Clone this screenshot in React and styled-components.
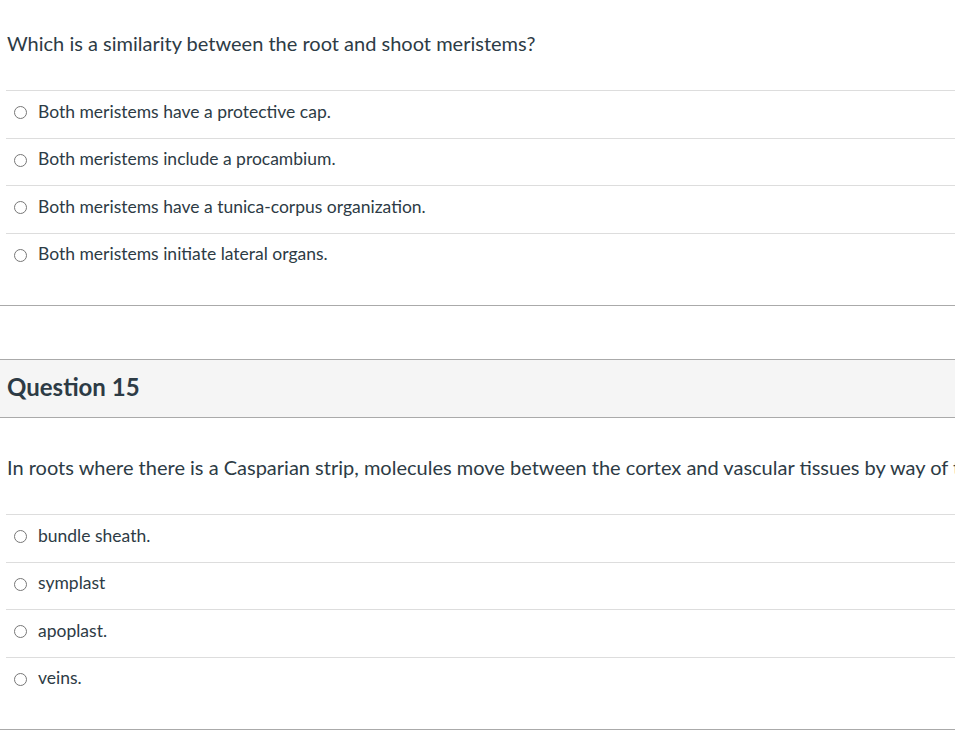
import React from "react";
import styled, { createGlobalStyle } from "styled-components";

const Global = createGlobalStyle`
  html, body { margin: 0; padding: 0; background: #fff; overflow: hidden; }
  body { font-family: Lato, "Noto Sans", sans-serif; color: #2d3b45; }
`;

const Page = styled.div`
  width: 955px;
  overflow: hidden;
`;

const Question = styled.section`
  border-bottom: 1px solid #aaaaaa;
  width: 1100px;
`;

const Header = styled.div`
  background: #f5f5f5;
  border-top: 1px solid #aaaaaa;
  border-bottom: 1px solid #aaaaaa;
  height: 57px;
  display: flex;
  align-items: center;
  padding-left: 7px;
  margin-top: ${(p) => p.$gap || 0}px;
`;

const Title = styled.h2`
  margin: 0;
  font-size: 24px;
  font-weight: 700;
  line-height: 1;
  margin-top: -4px;
`;

const Prompt = styled.p`
  margin: 0;
  padding: ${(p) => p.$top}px 0 0 7px;
  height: ${(p) => p.$h}px;
  box-sizing: border-box;
  font-size: 20px;
  line-height: 24px;
  white-space: nowrap;
`;

const Answers = styled.ul`
  list-style: none;
  margin: 0 0 0 6px;
  padding: 0 0 25px;
`;

const Answer = styled.li`
  border-top: 1px solid #dddddd;
  display: flex;
  align-items: center;
  gap: 11px;
  padding-left: 8px;
  padding-bottom: 5px;
  box-sizing: content-box;
  height: 41.5px;
  font-size: 17.5px;
`;

const Radio = styled.span`
  width: 11px;
  height: 11px;
  border: 1.3px solid #777777;
  border-radius: 50%;
  flex: none;
  margin-top: 2px;
`;

const Label = styled.span`
  line-height: 20px;
`;

const questions = [
  {
    prompt: "Which is a similarity between the root and shoot meristems?",
    answers: [
      "Both meristems have a protective cap.",
      "Both meristems include a procambium.",
      "Both meristems have a tunica-corpus organization.",
      "Both meristems initiate lateral organs.",
    ],
  },
  {
    title: "Question 15",
    prompt:
      "In roots where there is a Casparian strip, molecules move between the cortex and vascular tissues by way of the",
    answers: ["bundle sheath.", "symplast", "apoplast.", "veins."],
  },
];

export default function App() {
  return (
    <Page>
      <Global />
      {questions.map((q, i) => (
        <Question key={i}>
          {q.title && (
            <Header $gap={53}>
              <Title>{q.title}</Title>
            </Header>
          )}
          <Prompt $top={q.title ? 37 : 31} $h={q.title ? 96 : 90}>
            {q.prompt}
          </Prompt>
          <Answers>
            {q.answers.map((a) => (
              <Answer key={a}>
                <Radio />
                <Label>{a}</Label>
              </Answer>
            ))}
          </Answers>
        </Question>
      ))}
    </Page>
  );
}
